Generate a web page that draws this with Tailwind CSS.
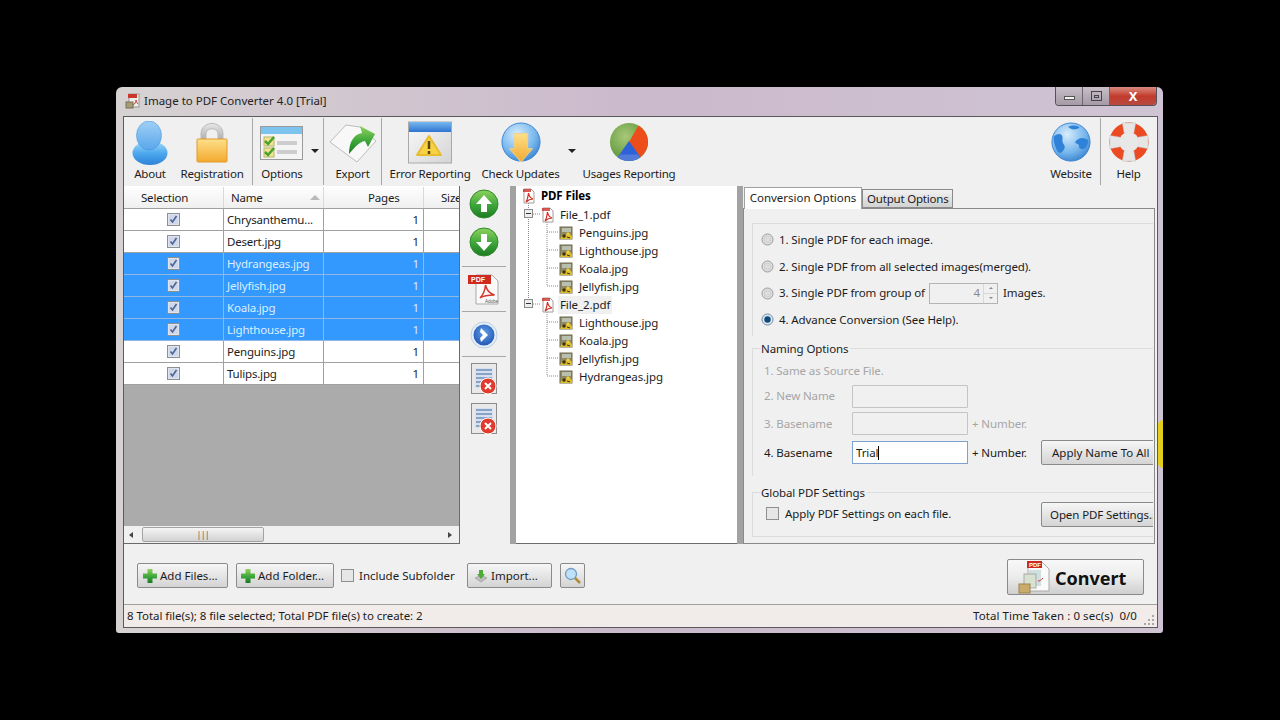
<!doctype html>
<html><head><meta charset="utf-8"><title>Image to PDF Converter</title>
<script src="https://cdn.jsdelivr.net/npm/@tailwindcss/browser@4"></script></head>
<body class="bg-black">
<svg class="absolute w-0 h-0" aria-hidden="true"><defs>
<linearGradient id="gBlue" x1="0" y1="0" x2="0" y2="1"><stop offset="0" stop-color="#a6dcf8"/><stop offset=".5" stop-color="#4ea9ee"/><stop offset="1" stop-color="#2f82d8"/></linearGradient>
<linearGradient id="gGold" x1="0" y1="0" x2="0" y2="1"><stop offset="0" stop-color="#fde08a"/><stop offset="1" stop-color="#f3a92e"/></linearGradient>
<linearGradient id="gSilver" x1="0" y1="0" x2="0" y2="1"><stop offset="0" stop-color="#e8e8e8"/><stop offset="1" stop-color="#a8a8a8"/></linearGradient>
<linearGradient id="gGreen" x1="0" y1="0" x2="0" y2="1"><stop offset="0" stop-color="#8ed25e"/><stop offset=".55" stop-color="#3ca53a"/><stop offset="1" stop-color="#1d7a22"/></linearGradient>
<linearGradient id="gHead" x1="0" y1="0" x2="0" y2="1"><stop offset="0" stop-color="#9fd0f5"/><stop offset="1" stop-color="#5aa6ec"/></linearGradient>
<linearGradient id="gPage" x1="0" y1="0" x2="1" y2="1"><stop offset="0" stop-color="#fafafa"/><stop offset="1" stop-color="#d4d4d4"/></linearGradient>
<linearGradient id="gBar" x1="0" y1="0" x2="0" y2="1"><stop offset="0" stop-color="#78b8ee"/><stop offset="1" stop-color="#2e74d0"/></linearGradient>
<radialGradient id="gGlobe" cx=".4" cy=".3" r=".8"><stop offset="0" stop-color="#d6ecfb"/><stop offset=".6" stop-color="#76b6ec"/><stop offset="1" stop-color="#2c78c8"/></radialGradient>
<radialGradient id="gNext" cx=".5" cy=".4" r=".6"><stop offset="0" stop-color="#5f9fe8"/><stop offset="1" stop-color="#2458b4"/></radialGradient>
<radialGradient id="gPie" cx=".4" cy=".35" r=".8"><stop offset="0" stop-color="#a8c878"/><stop offset="1" stop-color="#4a8a2a"/></radialGradient>
<symbol id="pdfs" viewBox="0 0 14 16"><path d="M2 1h7l3 3v11H2z" fill="#fff" stroke="#a89a9a"/><path d="M1 1h8v3H1z" fill="#c8281e" opacity=".75"/><path d="M4 14c2-3 2-6 2.500-9 .5 3 1.500 5 4.500 6-3 0-5 1-7 3z" fill="none" stroke="#cf2c22" stroke-width="1.200"/></symbol>
<symbol id="img" viewBox="0 0 14 14"><rect x="1" y="1" width="12" height="12" fill="#8f8a66" stroke="#6e6a50"/><rect x="3" y="2" width="9" height="4" fill="#b9bfae"/><path d="M1 13l3-5 2 2 3-4 4 4v3z" fill="#dcbc2a"/><circle cx="5" cy="10" r="1.800" fill="#3a3218"/><circle cx="9" cy="8" r="1.500" fill="#f0cf3c"/><path d="M8 11l3 1" stroke="#3a3218"/></symbol>
<symbol id="chk" viewBox="0 0 13 13"><rect x=".5" y=".5" width="12" height="12" fill="#dfe5f0" stroke="#8e8f8f"/><rect x="2" y="2" width="9" height="9" fill="#cfd7e8"/><path d="M3.500 6.500l2 2.500 4-6" fill="none" stroke="#4a6496" stroke-width="1.600"/></symbol>
<symbol id="rad" viewBox="0 0 13 13"><circle cx="6.500" cy="6.500" r="5.500" fill="#e3e3e3" stroke="#9a9a9a"/><circle cx="6.500" cy="6.500" r="3.500" fill="#dcdcdc" stroke="#cdcdcd"/></symbol>
<symbol id="radon" viewBox="0 0 13 13"><circle cx="6.500" cy="6.500" r="5.500" fill="#dfe8f2" stroke="#6f8aa8"/><circle cx="6.500" cy="6.500" r="3.200" fill="#0f4a78"/></symbol>
<symbol id="docx" viewBox="0 0 27 32"><rect x=".5" y=".5" width="25" height="30" fill="#e9e9e9" stroke="#8c8c8c"/><rect x="4" y="5" width="18" height="20" fill="#d6e0ee"/><path d="M5 7h16M5 11h16M5 15h16M5 19h10M5 23h8" stroke="#6d8fbc" stroke-width="1.500"/><circle cx="17" cy="23" r="8" fill="#e23a2c" stroke="#fff" stroke-width="1"/><path d="M14 20l6 6m0-6l-6 6" stroke="#fff" stroke-width="2"/></symbol>
<symbol id="plus" viewBox="0 0 16 16"><path d="M5.500 1h5v4.500H15v5h-4.500V15h-5v-4.500H1v-5h4.500z" fill="url(#gGreen)"/></symbol>
</defs></svg>

<div class="w-[1280px] h-[720px] pl-[116px] pt-[87px] overflow-hidden font-['Noto_Sans',sans-serif] text-[11.5px] leading-none text-[#1c1c1c]">
<div class="relative w-[1047px] h-[546px] rounded-t-[6px] rounded-b-[3px] pl-[7px] pr-[5px] pb-[5px] flex flex-col bg-gradient-to-r from-[#d6d2d2] via-[#cbb9cc] to-[#cfc4d4]">
  <div class="absolute right-0 top-[333px] w-[5px] h-[48px] rounded-l-full bg-[#e2cf1c]"></div>
  <!-- title bar -->
  <div class="h-[29px] pb-[2px] flex items-center shrink-0">
    <svg class="w-[16px] h-[16px] ml-[2px]" viewBox="0 0 16 16"><rect x="4" y="1" width="10" height="13" fill="#eee" stroke="#999"/><rect x="3" y="1" width="9" height="4" fill="#c8382a"/><rect x="1" y="9" width="7" height="6" fill="#a89c74" stroke="#77705a"/><path d="M8 12c2-1 3-3 3-5 .5 2 1 3 2 4" stroke="#c8382a" fill="none"/></svg>
    <span class="ml-[3px] text-[#222]">Image to PDF Converter 4.0 [Trial]</span>
    <div class="absolute right-[6px] top-0 flex h-[19px] w-[102px] rounded-b-[4px] border border-t-0 border-[#55505a] overflow-hidden">
      <div class="w-[27px] bg-gradient-to-b from-[#c8bfc8] to-[#a59aa6] border-r border-[#6c6670] flex items-center justify-center"><div class="w-[11px] h-[4px] mt-[4px] bg-[#f2f2f2] border border-[#555]"></div></div>
      <div class="w-[27px] bg-gradient-to-b from-[#c8bfc8] to-[#a59aa6] border-r border-[#6c6670] flex items-center justify-center"><div class="w-[11px] h-[10px] border border-[#444] flex items-center justify-center"><div class="w-[5px] h-[3px] border border-[#444]"></div></div></div>
      <div class="flex-1 bg-gradient-to-b from-[#d78a80] via-[#c23a2c] to-[#b8493f] flex items-center justify-center text-white font-bold text-[13px]">X</div>
    </div>
  </div>
  <!-- content -->
  <div class="flex-1 flex flex-col bg-[#f0f0f0] border border-[#5a5a5a] min-h-0">
    <!-- toolbar -->
    <div class="h-[69px] flex shrink-0 pr-[1px] tracking-[-0.2px] whitespace-nowrap">
      <div class="w-[52px] flex flex-col items-center pt-[4px]">
        <svg class="w-[36px] h-[44px]" viewBox="0 0 36 44"><ellipse cx="18" cy="32" rx="17.500" ry="12" fill="url(#gBlue)"/><ellipse cx="17" cy="14.500" rx="12.500" ry="14.500" fill="url(#gHead)" stroke="#3f8fdc" stroke-width=".5"/></svg>
        <span class="mt-[3px]">About</span>
      </div>
      <div class="w-[72px] flex flex-col items-center pt-[4px]">
        <svg class="w-[36px] h-[44px]" viewBox="0 0 36 44"><path d="M7 20v-7c0-14 22-14 22 0v7h-5v-7c0-7-12-7-12 0v7z" fill="url(#gSilver)" stroke="#bbb"/><rect x="3" y="18" width="30" height="23" rx="1" fill="url(#gGold)" stroke="#e09a2a"/></svg>
        <span class="mt-[3px]">Registration</span>
      </div>
      <div class="ml-[4px] w-[1px] my-[1px] bg-[#a8a8a8]"></div>
      <div class="relative w-[70px]">
        <div class="w-[58px] flex flex-col items-center pt-[4px]">
          <svg class="w-[44px] h-[44px]" viewBox="0 0 44 44"><rect x=".5" y="5.500" width="42" height="33" fill="#f4f4f4" stroke="#9a9a9a"/><rect x="1" y="6" width="41" height="7" fill="#7cc4ee"/><rect x="17" y="20" width="20" height="4" fill="#cdcdcd"/><rect x="17" y="29" width="20" height="4" fill="#cdcdcd"/><rect x="4" y="16" width="10" height="9" fill="#f1e592" stroke="#b4b46a"/><rect x="4" y="27" width="10" height="9" fill="#f1e592" stroke="#b4b46a"/><path d="M5 20l3 3 6-7M5 31l3 3 6-7" fill="none" stroke="#4ca02e" stroke-width="2.500"/></svg>
          <span class="mt-[3px]">Options</span>
        </div>
        <div class="absolute left-[58px] top-[32px] w-0 h-0 border-x-[4px] border-x-transparent border-t-[4px] border-t-[#222]"></div>
      </div>
      <div class="w-[1px] my-[1px] bg-[#a8a8a8]"></div>
      <div class="w-[57px] flex flex-col items-center pt-[4px]">
        <svg class="w-[50px] h-[44px]" viewBox="0 0 50 44"><path d="M2 21L18 4l14 2 16 14-19 21z" fill="#f8f8f8" stroke="#bdbdbd"/><path d="M21 33c0-12 5-20 13-21l-2-7 15 8-7 13-3-6c-6 1-10 6-16 13z" fill="url(#gGreen)"/></svg>
        <span class="mt-[3px]">Export</span>
      </div>
      <div class="w-[1px] my-[1px] bg-[#a8a8a8]"></div>
      <div class="w-[96px] flex flex-col items-center pt-[4px]">
        <svg class="w-[46px] h-[44px]" viewBox="0 0 46 44"><rect x="1.500" y="1" width="43" height="41" fill="url(#gPage)" stroke="#a9a9a9"/><rect x="2" y="1" width="42" height="10" fill="url(#gBar)"/><path d="M22 15L34 34H10z" fill="#f7d244" stroke="#e8bc30" stroke-linejoin="round" stroke-width="2"/><path d="M22 20v8m0 2v3" stroke="#5a4510" stroke-width="2.500"/></svg>
        <span class="mt-[3px]">Error Reporting</span>
      </div>
      <div class="w-[85px] flex flex-col items-center pt-[5px]">
        <svg class="w-[40px] h-[42px]" viewBox="0 0 42 44"><circle cx="21" cy="21" r="20" fill="url(#gGlobe)" stroke="#3a84d0"/><path d="M14 12h14v16h5L21 42 9 28h5z" fill="url(#gGold)" stroke="#efd28a"/></svg>
        <span class="mt-[4px]">Check Updates</span>
      </div>
      <div class="w-[18px] relative"><div class="absolute left-[5px] top-[32px] w-0 h-0 border-x-[4px] border-x-transparent border-t-[4px] border-t-[#222]"></div></div>
      <div class="w-[96px] flex flex-col items-center pt-[5px]">
        <svg class="w-[40px] h-[42px]" viewBox="0 0 42 44"><circle cx="21" cy="21" r="20" fill="url(#gPie)"/><path d="M21 21L31 3.700A20 20 0 0 1 33 37z" fill="#ec4d1a"/><path d="M21 20L33 37A20 20 0 0 1 9 37z" fill="#2e62d8"/><path d="M9 37A20 20 0 0 0 33 37L30 34H12z" fill="#6a8ad8" opacity=".6"/></svg>
        <span class="mt-[4px]">Usages Reporting</span>
      </div>
      <div class="flex-1"></div>
      <div class="w-[58px] flex flex-col items-center pt-[5px]">
        <svg class="w-[40px] h-[42px]" viewBox="0 0 42 44"><circle cx="21" cy="21" r="20" fill="url(#gGlobe)" stroke="#3a84d0"/><path d="M3 15c6-5 10-2 9 3s4 6 2 10-5 6-7 3S2 20 3 15zM26 20c4-4 8-4 13-1 0 6-4 11-8 9-3-1 0-4-3-5s-3-2-2-3zM18 5c4-2 10-2 12 1-4 2-8 3-12-1z" fill="#2f82d8"/></svg>
        <span class="mt-[4px]">Website</span>
      </div>
      <div class="w-[1px] my-[1px] bg-[#a8a8a8]"></div>
      <div class="w-[55px] flex flex-col items-center pt-[5px]">
        <svg class="w-[40px] h-[42px]" viewBox="0 0 42 44"><circle cx="21" cy="21" r="15.500" fill="none" stroke="#ec4a22" stroke-width="10"/><g fill="#e6e6e6" stroke="#c0c0c0" stroke-width=".5"><path d="M14 1h14l-2 11h-10z"/><path d="M14 41h14l-2-11h-10z"/><path d="M1 14v14l11-2v-10z"/><path d="M41 14v14l-11-2v-10z"/></g><circle cx="21" cy="21" r="10" fill="#e8e8e8"/></svg>
        <span class="mt-[4px]">Help</span>
      </div>
    </div>
    <!-- main split -->
    <div class="h-[358px] flex shrink-0 bg-[#f0f0f0]">
      <!-- table -->
      <div class="w-[336px] shrink-0 flex flex-col border-r border-b border-[#6a6a6a] bg-[#ababab] overflow-hidden tracking-[-0.2px] whitespace-nowrap">
        <div class="h-[23px] shrink-0 pt-[1px] flex items-center bg-gradient-to-b from-white to-[#efefef] border-b border-[#a0a0a0]">
          <div class="w-[100px] pl-[17px] border-r border-[#d8d8d8] h-full flex items-center">Selection</div>
          <div class="w-[100px] pl-[7px] border-r border-[#d8d8d8] h-full flex items-center relative">Name<div class="absolute left-[86px] top-[8px] w-0 h-0 border-x-[5px] border-x-transparent border-b-[5px] border-b-[#b8b8b8]"></div></div>
          <div class="w-[100px] pl-[44px] border-r border-[#d8d8d8] h-full flex items-center">Pages</div>
          <div class="w-[35px] pl-[17px] h-full flex items-center overflow-hidden">Size</div>
        </div>
        <div class="flex h-[22px] bg-white border-b border-[#a0a0a0]"><div class="w-[100px] flex items-center justify-center border-r border-[#a0a0a0]"><svg class="w-[13px] h-[13px]"><use href="#chk"/></svg></div><div class="w-[100px] pl-[3px] flex items-center border-r border-[#a0a0a0]">Chrysanthemu...</div><div class="w-[100px] pr-[4px] flex items-center justify-end border-r border-[#a0a0a0]">1</div><div class="flex-1"></div></div>
        <div class="flex h-[22px] bg-white border-b border-[#a0a0a0]"><div class="w-[100px] flex items-center justify-center border-r border-[#a0a0a0]"><svg class="w-[13px] h-[13px]"><use href="#chk"/></svg></div><div class="w-[100px] pl-[3px] flex items-center border-r border-[#a0a0a0]">Desert.jpg</div><div class="w-[100px] pr-[4px] flex items-center justify-end border-r border-[#a0a0a0]">1</div><div class="flex-1"></div></div>
        <div class="flex h-[22px] bg-[#3399ff] text-[#dcefff] border-b border-[#8fb8e6]"><div class="w-[100px] flex items-center justify-center border-r border-[#8fb8e6]"><svg class="w-[13px] h-[13px]"><use href="#chk"/></svg></div><div class="w-[100px] pl-[3px] flex items-center border-r border-[#8fb8e6]">Hydrangeas.jpg</div><div class="w-[100px] pr-[4px] flex items-center justify-end border-r border-[#8fb8e6]">1</div><div class="flex-1"></div></div>
        <div class="flex h-[22px] bg-[#3399ff] text-[#dcefff] border-b border-[#8fb8e6]"><div class="w-[100px] flex items-center justify-center border-r border-[#8fb8e6]"><svg class="w-[13px] h-[13px]"><use href="#chk"/></svg></div><div class="w-[100px] pl-[3px] flex items-center border-r border-[#8fb8e6]">Jellyfish.jpg</div><div class="w-[100px] pr-[4px] flex items-center justify-end border-r border-[#8fb8e6]">1</div><div class="flex-1"></div></div>
        <div class="flex h-[22px] bg-[#3399ff] text-[#dcefff] border-b border-[#8fb8e6]"><div class="w-[100px] flex items-center justify-center border-r border-[#8fb8e6]"><svg class="w-[13px] h-[13px]"><use href="#chk"/></svg></div><div class="w-[100px] pl-[3px] flex items-center border-r border-[#8fb8e6]">Koala.jpg</div><div class="w-[100px] pr-[4px] flex items-center justify-end border-r border-[#8fb8e6]">1</div><div class="flex-1"></div></div>
        <div class="flex h-[22px] bg-[#3399ff] text-[#dcefff] border-b border-[#8fb8e6]"><div class="w-[100px] flex items-center justify-center border-r border-[#8fb8e6]"><svg class="w-[13px] h-[13px]"><use href="#chk"/></svg></div><div class="w-[100px] pl-[3px] flex items-center border-r border-[#8fb8e6]">Lighthouse.jpg</div><div class="w-[100px] pr-[4px] flex items-center justify-end border-r border-[#8fb8e6]">1</div><div class="flex-1"></div></div>
        <div class="flex h-[22px] bg-white border-b border-[#a0a0a0]"><div class="w-[100px] flex items-center justify-center border-r border-[#a0a0a0]"><svg class="w-[13px] h-[13px]"><use href="#chk"/></svg></div><div class="w-[100px] pl-[3px] flex items-center border-r border-[#a0a0a0]">Penguins.jpg</div><div class="w-[100px] pr-[4px] flex items-center justify-end border-r border-[#a0a0a0]">1</div><div class="flex-1"></div></div>
        <div class="flex h-[22px] bg-white border-b border-[#a0a0a0]"><div class="w-[100px] flex items-center justify-center border-r border-[#a0a0a0]"><svg class="w-[13px] h-[13px]"><use href="#chk"/></svg></div><div class="w-[100px] pl-[3px] flex items-center border-r border-[#a0a0a0]">Tulips.jpg</div><div class="w-[100px] pr-[4px] flex items-center justify-end border-r border-[#a0a0a0]">1</div><div class="flex-1"></div></div>
        <div class="flex-1"></div>
        <div class="h-[17px] shrink-0 bg-[#f0f0f0] flex items-center relative">
          <div class="ml-[5px] w-0 h-0 border-y-[3px] border-y-transparent border-r-[4px] border-r-[#444]"></div>
          <div class="ml-[9px] w-[122px] h-[15px] rounded-[2px] border border-[#a4a4a4] bg-gradient-to-b from-[#f4f4f4] to-[#d2d2d2] flex items-center justify-center text-[8px] text-[#555]">|||</div>
          <div class="ml-auto mr-[7px] w-0 h-0 border-y-[3px] border-y-transparent border-l-[4px] border-l-[#444]"></div>
        </div>
      </div>
      <!-- middle tools -->
      <div class="w-[50px] flex flex-col items-center pt-[3px] pr-[2px] shrink-0">
        <svg class="w-[30px] h-[30px]" viewBox="0 0 30 30"><circle cx="15" cy="15" r="14" fill="url(#gGreen)" stroke="#2f8a2a"/><path d="M15 6l8 9h-5v8h-6v-8H7z" fill="#fff"/></svg>
        <svg class="w-[30px] h-[30px] mt-[8px]" viewBox="0 0 30 30"><circle cx="15" cy="15" r="14" fill="url(#gGreen)" stroke="#2f8a2a"/><path d="M15 24l8-9h-5V7h-6v8H7z" fill="#fff"/></svg>
        <div class="w-[44px] h-[1px] bg-[#a8a8a8] mt-[9px]"></div>
        <svg class="w-[32px] h-[31px] mt-[7px]" viewBox="0 0 32 31"><path d="M8 1h16l6 6v23H8z" fill="#fafafa" stroke="#a9a9a9"/><rect x="0" y="1" width="23" height="9" fill="#cf2a20"/><text x="3" y="8" font-size="7" font-weight="700" fill="#fff" font-family="Liberation Sans">PDF</text><path d="M12 24c4-4 5-8 5.500-13 1 5 3 8 9 10-6 0-10 0-14.500 3z" fill="none" stroke="#d23a30" stroke-width="1.500"/><text x="17" y="29" font-size="4.500" fill="#555" font-family="Liberation Sans">Adobe</text></svg>
        <div class="w-[44px] h-[1px] bg-[#a8a8a8] mt-[6px]"></div>
        <svg class="w-[28px] h-[28px] mt-[9px]" viewBox="0 0 28 28"><circle cx="14" cy="14" r="13" fill="#e4eef8" stroke="#bfcfdf"/><circle cx="14" cy="14" r="10.500" fill="url(#gNext)"/><path d="M11 7l7 7-7 7-1-4 3-3-3-3z" fill="#fff"/></svg>
        <div class="w-[44px] h-[1px] bg-[#a8a8a8] mt-[7px]"></div>
        <svg class="w-[27px] h-[32px] mt-[6px]"><use href="#docx"/></svg>
        <svg class="w-[27px] h-[32px] mt-[8px]"><use href="#docx"/></svg>
      </div>
      <div class="w-[6px] bg-[#a2a2a2] shrink-0"></div>
      <!-- tree -->
      <div class="relative w-[221px] shrink-0 bg-white border-b border-[#6a6a6a] pt-[2px] tracking-[-0.1px]">
        <svg class="absolute left-0 top-0 w-[70px] h-[210px]" viewBox="0 0 70 210"><g stroke="#8a8a8a" stroke-dasharray="1 1" fill="none"><path d="M12.500 17v100M17 28h8M31 28v72M31 46h12M31 64h12M31 82h12M31 100h12M31 118v72M31 136h12M31 154h12M31 172h12M31 190h12M17 118h8"/></g><rect x="8.500" y="23.500" width="8" height="8" fill="#eee" stroke="#8a8a8a"/><path d="M10 27.500h5" stroke="#333"/><rect x="8.500" y="113.500" width="8" height="8" fill="#eee" stroke="#8a8a8a"/><path d="M10 117.500h5" stroke="#333"/></svg>
        <div class="relative h-[18px] -mt-[1px] mb-[1px] flex items-center pl-[6px]"><svg class="w-[14px] h-[16px]"><use href="#pdfs"/></svg><span class="ml-[5px] font-bold text-black">PDF Files</span></div>
        <div class="relative h-[18px] flex items-center pl-[25px]"><svg class="w-[14px] h-[16px]"><use href="#pdfs"/></svg><span class="ml-[5px]">File_1.pdf</span></div>
        <div class="relative h-[18px] flex items-center pl-[43px]"><svg class="w-[14px] h-[14px]"><use href="#img"/></svg><span class="ml-[6px]">Penguins.jpg</span></div>
        <div class="relative h-[18px] flex items-center pl-[43px]"><svg class="w-[14px] h-[14px]"><use href="#img"/></svg><span class="ml-[6px]">Lighthouse.jpg</span></div>
        <div class="relative h-[18px] flex items-center pl-[43px]"><svg class="w-[14px] h-[14px]"><use href="#img"/></svg><span class="ml-[6px]">Koala.jpg</span></div>
        <div class="relative h-[18px] flex items-center pl-[43px]"><svg class="w-[14px] h-[14px]"><use href="#img"/></svg><span class="ml-[6px]">Jellyfish.jpg</span></div>
        <div class="relative h-[18px] flex items-center pl-[25px]"><svg class="w-[14px] h-[16px]"><use href="#pdfs"/></svg><span class="ml-[3px] px-[2px] py-[3px] bg-[#f0f0f0]">File_2.pdf</span></div>
        <div class="relative h-[18px] flex items-center pl-[43px]"><svg class="w-[14px] h-[14px]"><use href="#img"/></svg><span class="ml-[6px]">Lighthouse.jpg</span></div>
        <div class="relative h-[18px] flex items-center pl-[43px]"><svg class="w-[14px] h-[14px]"><use href="#img"/></svg><span class="ml-[6px]">Koala.jpg</span></div>
        <div class="relative h-[18px] flex items-center pl-[43px]"><svg class="w-[14px] h-[14px]"><use href="#img"/></svg><span class="ml-[6px]">Jellyfish.jpg</span></div>
        <div class="relative h-[18px] flex items-center pl-[43px]"><svg class="w-[14px] h-[14px]"><use href="#img"/></svg><span class="ml-[6px]">Hydrangeas.jpg</span></div>
      </div>
      <div class="w-[6px] bg-[#a2a2a2] shrink-0"></div>
      <!-- tabs -->
      <div class="flex-1 flex flex-col min-w-0 whitespace-nowrap">
        <div class="h-[22px] pl-[1px] flex items-end shrink-0 relative z-10">
          <div class="w-[118px] h-[22px] pb-[2px] bg-white border border-b-0 border-[#a0a0a0] flex items-center justify-center -mb-[1px]">Conversion Options</div>
          <div class="w-[91px] h-[19px] pl-[4px] tracking-[-0.2px] bg-gradient-to-b from-[#f2f2f2] to-[#d2d2d2] border border-[#8a8a8a] flex items-center">Output Options</div>
        </div>
        <div class="flex-1 mr-[2px] border border-[#8a8a8a] pl-[8px] pr-[1px] overflow-hidden flex flex-col min-h-0 tracking-[-0.1px]">
          <div class="h-[113px] mt-[14px] shrink-0 border-t border-l border-[#dcdcdc] pt-[2px] flex flex-col">
            <div class="h-[27px] flex items-center pl-[8px]"><svg class="w-[13px] h-[13px]"><use href="#rad"/></svg><span class="ml-[5px]">1. Single PDF for each image.</span></div>
            <div class="h-[27px] flex items-center pl-[8px]"><svg class="w-[13px] h-[13px]"><use href="#rad"/></svg><span class="ml-[5px]">2. Single PDF from all selected images(merged).</span></div>
            <div class="h-[26px] flex items-center pl-[8px]"><svg class="w-[13px] h-[13px]"><use href="#rad"/></svg><span class="ml-[5px] w-[150px]">3. Single PDF from group of</span>
              <div class="w-[69px] h-[21px] border border-[#b4b4b4] flex items-center justify-end text-[#8a8a8a] shrink-0"><span class="mr-[3px]">4</span><div class="w-[14px] h-full border-l border-[#d8d8d8] flex flex-col"><div class="flex-1 border-b border-[#d8d8d8] flex items-center justify-center"><div class="w-0 h-0 border-x-[2px] border-x-transparent border-b-[2px] border-b-[#888]"></div></div><div class="flex-1 flex items-center justify-center"><div class="w-0 h-0 border-x-[2px] border-x-transparent border-t-[2px] border-t-[#888]"></div></div></div></div>
              <span class="ml-[5px]">Images.</span></div>
            <div class="h-[27px] flex items-center pl-[8px]"><svg class="w-[13px] h-[13px]"><use href="#radon"/></svg><span class="ml-[5px]">4. Advance Conversion (See Help).</span></div>
          </div>
          <div class="h-[134px] mt-[6px] shrink-0 relative overflow-x-clip">
            <div class="absolute left-0 right-0 top-[6px] bottom-0 border-t border-l border-[#dcdcdc]"></div>
            <div class="relative flex flex-col">
              <div class="pl-[9px] h-[14px] flex items-center"><span class="bg-[#f0f0f0] pr-[2px] py-[1px]">Naming Options</span></div>
              <div class="pl-[12px] h-[18px] mt-[6px] flex items-center text-[#a6a6a6]">1. Same as Source File.</div>
              <div class="h-[23px] mt-[5px] flex items-center text-[#a6a6a6]"><span class="pl-[12px] w-[100px] shrink-0 -mt-[1px]">2. New Name</span><div class="w-[116px] h-[23px] shrink-0 border border-[#c4c4c4] rounded-[1px]"></div></div>
              <div class="h-[23px] mt-[4px] flex items-center text-[#a6a6a6]"><span class="pl-[12px] w-[100px] shrink-0">3. Basename</span><div class="w-[116px] h-[23px] shrink-0 border border-[#c4c4c4] rounded-[1px]"></div><span class="ml-[4px] shrink-0">+ Number.</span></div>
              <div class="h-[25px] mt-[5px] flex items-center shrink-0"><span class="pl-[12px] w-[100px] shrink-0">4. Basename</span><div class="w-[116px] h-[23px] shrink-0 border border-[#7da2ce] bg-white flex items-center pl-[3px]">Trial<span class="w-[1px] h-[14px] bg-black"></span></div><span class="ml-[4px] w-[69px] shrink-0">+ Number.</span><div class="w-[114px] h-[25px] shrink-0 rounded-[2px] border border-[#8a8a8a] bg-gradient-to-b from-[#f6f6f6] to-[#d4d4d4] flex items-center pl-[10px] tracking-normal">Apply Name To All</div></div>
            </div>
          </div>
          <div class="h-[51px] mt-[10px] shrink-0 relative overflow-x-clip">
            <div class="absolute left-0 right-0 top-[6px] bottom-0 border-t border-l border-b border-[#dcdcdc]"></div>
            <div class="relative flex flex-col">
              <div class="pl-[9px] h-[14px] flex items-center"><span class="bg-[#f0f0f0] pr-[2px] py-[1px]">Global PDF Settings</span></div>
              <div class="h-[25px] mt-[2px] flex items-center pl-[14px]"><svg class="w-[13px] h-[13px] shrink-0 -mt-[2px]" viewBox="0 0 13 13"><rect x=".5" y=".5" width="12" height="12" fill="#e6e6e6" stroke="#8e8f8f"/></svg><span class="ml-[6px] w-[256px] shrink-0 -mt-[2px]">Apply PDF Settings on each file.</span><div class="w-[114px] h-[25px] shrink-0 rounded-[2px] border border-[#8a8a8a] bg-gradient-to-b from-[#f6f6f6] to-[#d4d4d4] flex items-center pl-[8px]">Open PDF Settings...</div></div>
            </div>
          </div>
        </div>
      </div>
    </div>
    <!-- bottom bar -->
    <div class="h-[60px] shrink-0 flex items-start pl-[13px] pr-[13px] whitespace-nowrap">
      <div class="flex items-center h-[25px] mt-[19px]">
        <div class="w-[91px] h-[25px] rounded-[2px] border border-[#8a8a8a] bg-gradient-to-b from-[#f6f6f6] to-[#d4d4d4] flex items-center pl-[4px]"><svg class="w-[16px] h-[16px]"><use href="#plus"/></svg><span class="ml-[2px]">Add Files...</span></div>
        <div class="ml-[8px] w-[98px] h-[25px] rounded-[2px] border border-[#8a8a8a] bg-gradient-to-b from-[#f6f6f6] to-[#d4d4d4] flex items-center pl-[3px]"><svg class="w-[16px] h-[16px]"><use href="#plus"/></svg><span class="ml-[2px]">Add Folder...</span></div>
        <svg class="ml-[7px] w-[13px] h-[13px]" viewBox="0 0 13 13"><rect x=".5" y=".5" width="12" height="12" fill="#e6e6e6" stroke="#8e8f8f"/></svg>
        <span class="ml-[5px] w-[108px]">Include Subfolder</span>
        <div class="w-[85px] h-[25px] rounded-[2px] border border-[#8a8a8a] bg-gradient-to-b from-[#f6f6f6] to-[#d4d4d4] flex items-center pl-[6px]"><svg class="w-[14px] h-[14px]" viewBox="0 0 14 14"><path d="M1 9l6-3 6 3-6 4z" fill="#bdbdbd" stroke="#888" stroke-width=".5"/><path d="M5 1h4v4h2l-4 5-4-5h2z" fill="#4ea83a"/></svg><span class="ml-[3px]">Import...</span></div>
        <div class="ml-[8px] w-[25px] h-[25px] rounded-[2px] border border-[#8a8a8a] bg-gradient-to-b from-[#f6f6f6] to-[#d4d4d4] flex items-center justify-center"><svg class="w-[18px] h-[18px]" viewBox="0 0 18 18"><circle cx="7" cy="7" r="5.500" fill="#bfe0f6" stroke="#6f9cc4" stroke-width="1.300"/><path d="M11 11l5 5" stroke="#b08a3a" stroke-width="2.500"/></svg></div>
      </div>
      <div class="ml-auto mt-[15px] w-[137px] h-[36px] rounded-[2px] border border-[#8a8a8a] bg-gradient-to-b from-[#f8f8f8] via-[#ececec] to-[#cfcfcf] flex items-center pl-[10px]">
        <svg class="w-[34px] h-[34px]" viewBox="0 0 34 34"><path d="M10 2h14l7 7v22H10z" fill="#fafafa" stroke="#aaa"/><rect x="9" y="1" width="15" height="7" fill="#cf2a20"/><text x="11" y="7" font-size="6" font-weight="700" fill="#fff" font-family="Liberation Sans">PDF</text><rect x="11" y="10" width="12" height="16" fill="#cfe0e0"/><path d="M25 18c-2 2-3 3-5 3" stroke="#cf2a20" fill="none"/><rect x="6" y="14" width="12" height="14" fill="#d8e0d0" stroke="#aaa"/><rect x="1" y="24" width="11" height="9" fill="#c9ac6a" stroke="#9a8450"/></svg>
        <span class="ml-[3px] mt-[1px] font-bold text-[18px] text-[#111]">Convert</span>
      </div>
    </div>
    <!-- status bar -->
    <div class="flex-1 flex items-center border-t border-[#a0a0a0] bg-[#f1ecea] pl-[3px] pr-[1px] relative whitespace-nowrap">
      <span class="tracking-[-0.05px]">8 Total file(s); 8 file selected; Total PDF file(s) to create: 2</span>
      <span class="ml-auto mr-[19px] tracking-[0.05px]">Total Time Taken : 0 sec(s)&nbsp; 0/0</span>
      <svg class="absolute right-[2px] bottom-[2px] w-[11px] h-[11px]" viewBox="0 0 11 11"><g fill="#a8a8a8"><rect x="8" y="1" width="2" height="2"/><rect x="8" y="5" width="2" height="2"/><rect x="8" y="9" width="2" height="2"/><rect x="4" y="5" width="2" height="2"/><rect x="4" y="9" width="2" height="2"/><rect x="0" y="9" width="2" height="2"/></g></svg>
    </div>
  </div>
</div>
</div>
</body></html>
